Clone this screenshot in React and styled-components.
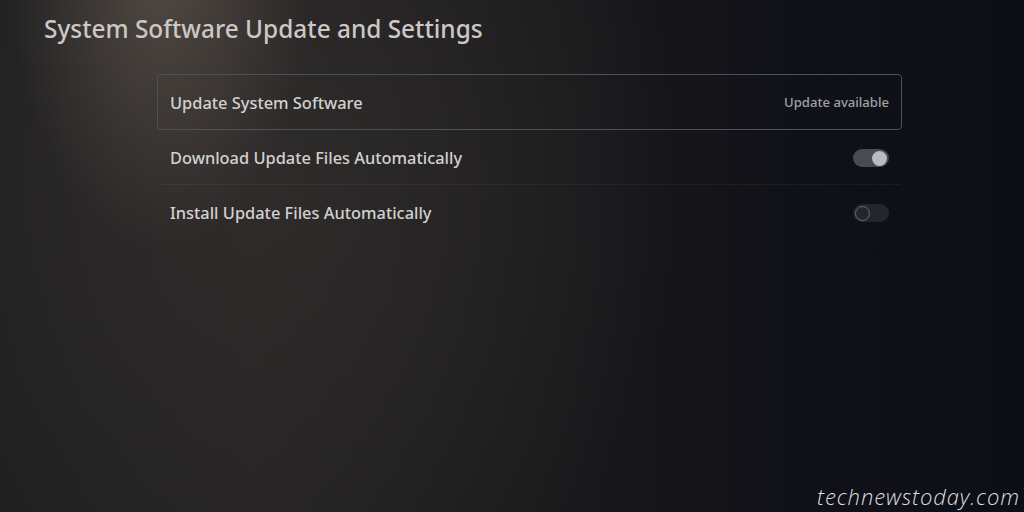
import styled, { createGlobalStyle } from 'styled-components';

const GlobalStyle = createGlobalStyle`
  html, body {
    margin: 0;
    padding: 0;
    background: #111216;
  }
  * {
    box-sizing: border-box;
  }
`;

const Screen = styled.div`
  position: relative;
  width: 1024px;
  height: 512px;
  overflow: hidden;
  font-family: 'Noto Sans', 'Open Sans', sans-serif;
  background:
    radial-gradient(ellipse 150px 280px at 160px -30px, rgba(120, 106, 94, 0.5), rgba(120, 106, 94, 0) 100%),
    radial-gradient(ellipse 420px 520px at 260px 180px, rgba(48, 44, 44, 0.9), rgba(48, 44, 44, 0) 100%),
    linear-gradient(90deg, #1f1f20 0%, #232222 25%, #19191b 55%, #101118 80%, #0c0e16 100%);
  padding: 12px 122px 0 44px;
`;

const Title = styled.h1`
  margin: 0 0 28px;
  font-size: 24.4px;
  line-height: 34px;
  font-weight: 500;
  color: #cbc8c5;
`;

const List = styled.div`
  display: flex;
  flex-direction: column;
  margin-left: 113px;
`;

const Row = styled.div`
  display: flex;
  align-items: center;
  justify-content: space-between;
  height: ${p => (p.$focused ? '56px' : '55px')};
  padding: 0 12px;
  border-radius: 4px;
  border: 1.5px solid ${p => (p.$focused ? '#4e5057' : 'transparent')};
  border-bottom-color: ${p =>
    p.$focused ? '#4e5057' : p.$divider ? 'rgba(255,255,255,0.05)' : 'transparent'};
`;

const Label = styled.span`
  font-size: 16.4px;
  font-weight: 500;
  color: #d2d1d0;
`;

const Status = styled.span`
  font-size: 13.1px;
  font-weight: 500;
  color: #9fa1a7;
`;

const Track = styled.span`
  position: relative;
  display: inline-block;
  width: 36px;
  height: 18px;
  border-radius: 9px;
  background: ${p => (p.$on ? '#4a4b50' : '#24262c')};
`;

const Knob = styled.span`
  position: absolute;
  top: 2px;
  left: ${p => (p.$on ? '19px' : '2px')};
  width: 15px;
  height: 15px;
  border-radius: 50%;
  background: ${p => (p.$on ? '#b9bbc0' : 'transparent')};
  border: ${p => (p.$on ? 'none' : '1.5px solid #6a6c72')};
`;

const Watermark = styled.div`
  position: absolute;
  right: 4px;
  bottom: 1px;
  font-family: 'Open Sans', sans-serif;
  font-style: italic;
  font-size: 22px;
  font-weight: 300;
  color: #dedede;
  letter-spacing: 0.9px;
`;

const Toggle = ({ on }) => (
  <Track $on={on}>
    <Knob $on={on} />
  </Track>
);

export default function App() {
  return (
    <>
      <GlobalStyle />
      <Screen>
        <Title>System Software Update and Settings</Title>
        <List>
          <Row $focused>
            <Label>Update System Software</Label>
            <Status>Update available</Status>
          </Row>
          <Row $divider>
            <Label>Download Update Files Automatically</Label>
            <Toggle on />
          </Row>
          <Row>
            <Label>Install Update Files Automatically</Label>
            <Toggle />
          </Row>
        </List>
        <Watermark>technewstoday.com</Watermark>
      </Screen>
    </>
  );
}
